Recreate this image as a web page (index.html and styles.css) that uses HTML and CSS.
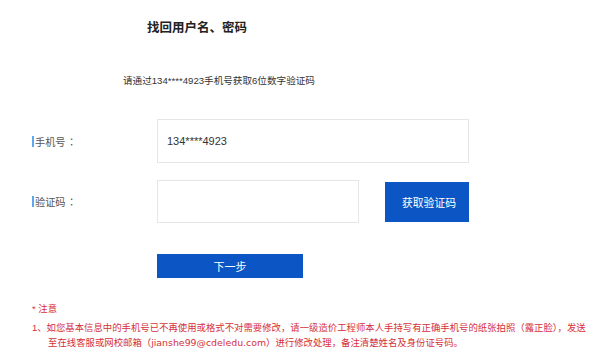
FILE: index.html
```html
<!DOCTYPE html>
<html>
<head>
  <meta charset="utf-8">
  <title>找回用户名、密码</title>
  <link rel="stylesheet" href="styles.css">
</head>
<body>
  <div class="container">
    <h2 class="title">找回用户名、密码</h2>
    <p class="tip">请通过134****4923手机号获取6位数字验证码</p>
    <div class="form">
      <div class="form-row">
        <label class="form-label">手机号<span class="colon">：</span></label>
        <div class="form-field">
          <input type="text" class="text-input phone-input" value="134****4923" readonly>
        </div>
      </div>
      <div class="form-row code-row">
        <label class="form-label">验证码<span class="colon">：</span></label>
        <div class="form-field">
          <input type="text" class="text-input code-input">
          <button class="code-button">获取验证码</button>
        </div>
      </div>
      <div class="form-actions">
        <button class="next-button">下一步</button>
      </div>
    </div>
    <div class="notes">
      <div class="notes-title">* 注意</div>
      <ol class="notes-list">
        <li>1、如您基本信息中的手机号已不再使用或格式不对需要修改，请一级造价工程师本人手持写有正确手机号的纸张拍照（露正脸），发送<br>至在线客服或网校邮箱（<span class="email">jianshe99@cdeledu.com</span>）进行修改处理，备注清楚姓名及身份证号码。</li>
      </ol>
    </div>
  </div>
</body>
</html>
```

FILE: styles.css
```css
:root {
  --text-color: #333;
  --label-color: #555;
  --border-color: #e6e6e6;
  --primary-color: #0b56c4;
  --accent-bar: #5ea8ee;
  --note-color: #d5303a;
}

body {
  margin: 0;
  background-color: #fff;
  color: var(--text-color);
  font-family: "Liberation Sans", "Noto Sans CJK SC", sans-serif;
}

.container {
  width: 596px;
  padding: 18px 0 0 0;
}

.title {
  margin: 0 0 0 147px;
  font-size: 12.5px;
  font-weight: bold;
  line-height: 20px;
  color: #222;
}

.tip {
  margin: 35px 0 0 123px;
  font-size: 9.6px;
  line-height: 16px;
  color: var(--text-color);
}

.form {
  margin-top: 30px;
  padding-left: 32px;
}

.form-row {
  display: flex;
  align-items: center;
  height: 44px;
}

.code-row {
  margin-top: 17px;
  height: 43px;
}

.form-label {
  display: flex;
  align-items: center;
  gap: 1px;
  width: 125px;
  font-family: "Noto Sans CJK SC", sans-serif;
  font-size: 10.2px;
  color: var(--label-color);
}

.form-label::before {
  content: "";
  width: 2px;
  height: 11px;
  background-color: var(--accent-bar);
}

.colon {
  font-family: "Noto Sans CJK TC", sans-serif;
}

.form-field {
  display: flex;
  align-items: center;
  gap: 26px;
  height: 100%;
}

.text-input {
  box-sizing: border-box;
  height: 100%;
  padding: 0 9px;
  border: 1px solid var(--border-color);
  outline: none;
  font-family: "Liberation Sans", "Noto Sans CJK SC", sans-serif;
  font-size: 11px;
  color: var(--text-color);
}

.phone-input {
  width: 312px;
}

.code-input {
  width: 202px;
}

.code-button {
  width: 84px;
  height: 40px;
  padding: 0 0 0 4px;
  border: none;
  background-color: var(--primary-color);
  color: #fff;
  font-family: "Noto Sans CJK SC", sans-serif;
  font-size: 10.8px;
  cursor: pointer;
}

.form-actions {
  margin-top: 31px;
  padding-left: 125px;
}

.next-button {
  display: block;
  width: 146px;
  height: 24px;
  border: none;
  background-color: var(--primary-color);
  color: #fff;
  font-family: "Noto Sans CJK SC", sans-serif;
  font-size: 11px;
  cursor: pointer;
}

.notes {
  margin-top: 23px;
  padding-left: 32px;
  color: var(--note-color);
  font-size: 9.4px;
  white-space: nowrap;
}

.notes-title {
  line-height: 16px;
}

.notes-list {
  margin: 3px 0 0 0;
  padding: 0 0 0 16px;
  list-style: none;
  line-height: 15px;
}

.notes-list li {
  text-indent: -16px;
}

.email {
  font-family: "DejaVu Sans", sans-serif;
}
```
